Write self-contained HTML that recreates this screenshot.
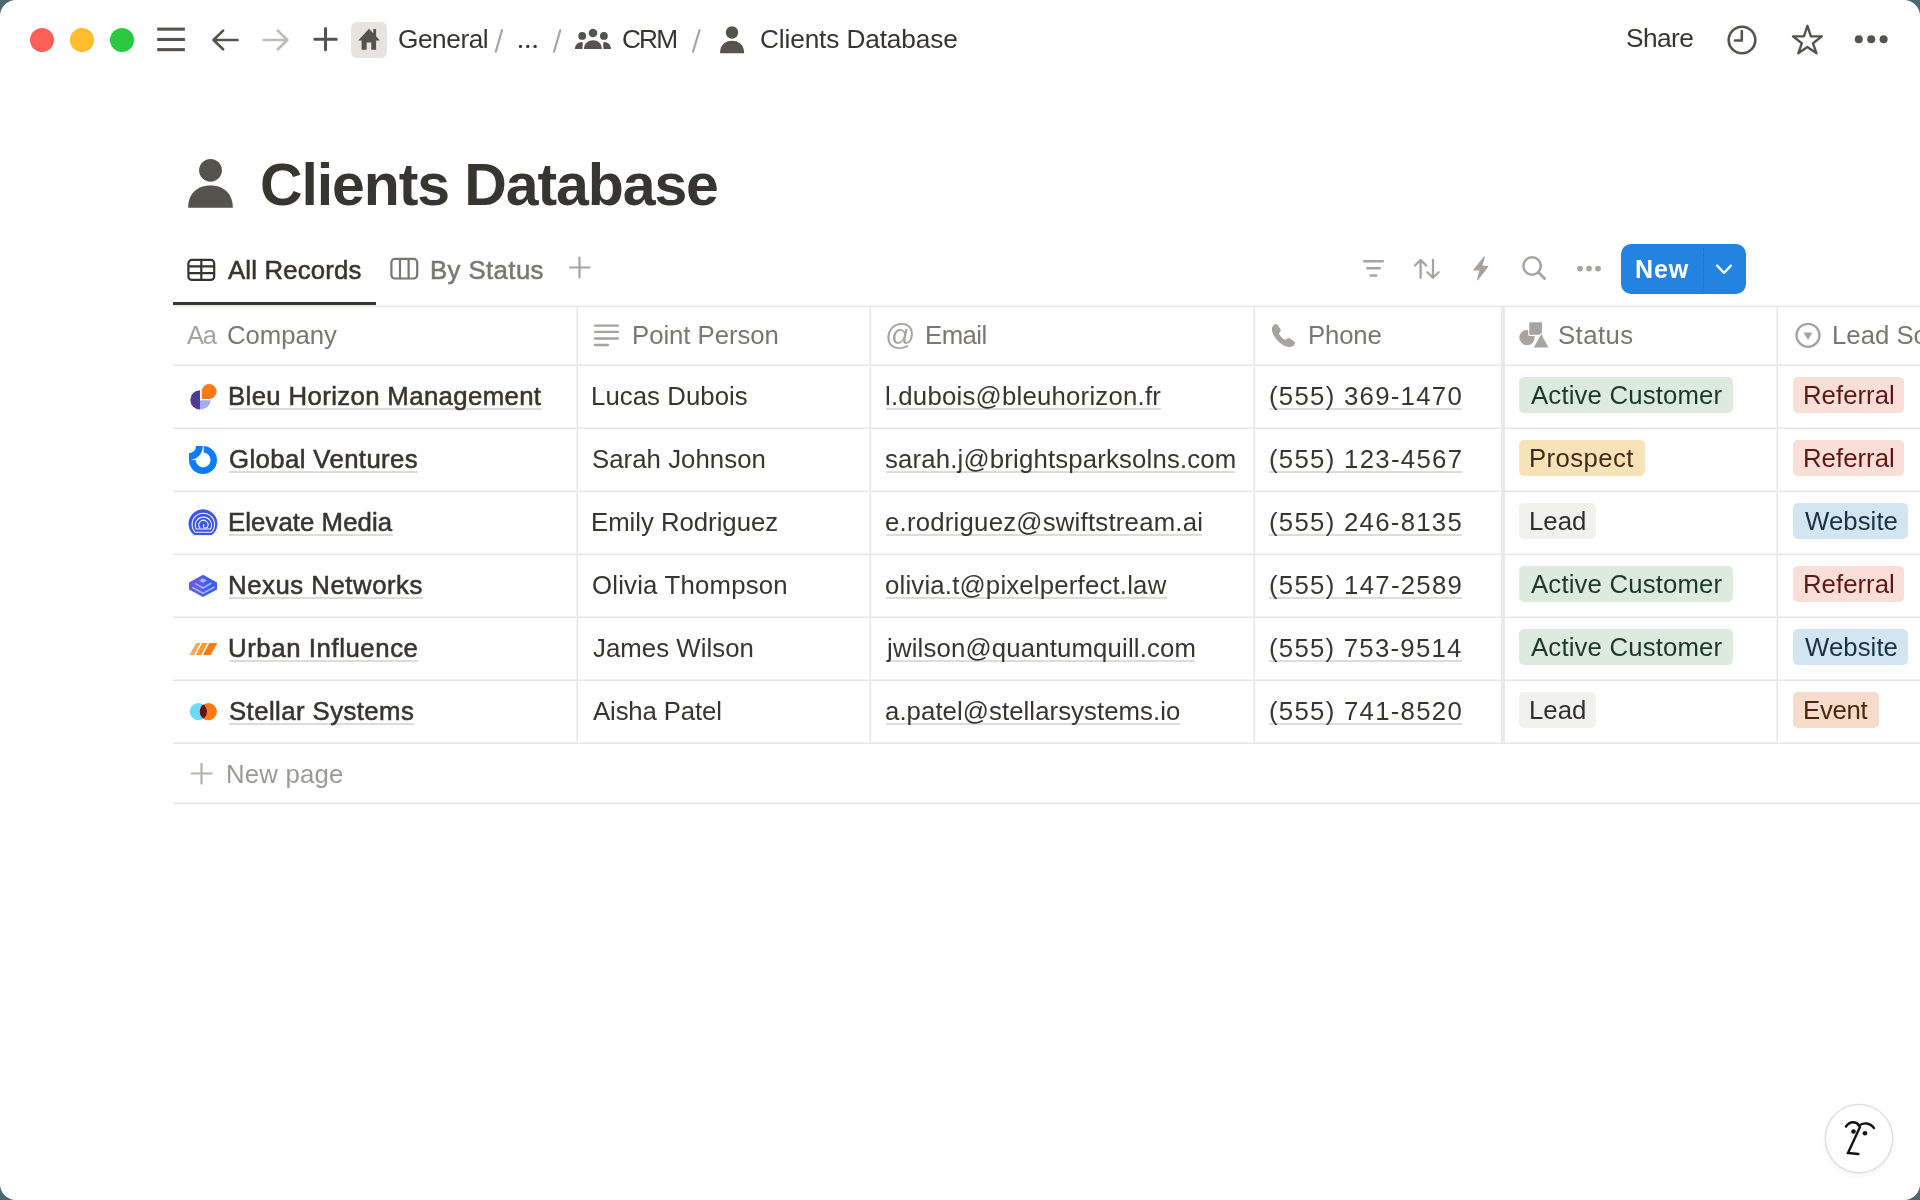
<!DOCTYPE html>
<html><head><meta charset="utf-8"><style>
html,body{margin:0;padding:0;width:1920px;height:1200px;overflow:hidden;background:#4c6871;}
body{font-family:"Liberation Sans",sans-serif;color:#37352f;}
#win{position:absolute;left:0;top:0;width:1920px;height:1200px;background:#fff;border-radius:16px;overflow:hidden;}
.a{position:absolute;}
.t{position:absolute;white-space:nowrap;line-height:1;will-change:transform;}
.m{-webkit-text-stroke:0.55px currentColor;}
svg{position:absolute;left:0;top:0;overflow:visible;}
</style></head><body>
<div id="win">
<div class="a" style="left:30px;top:28px;width:24px;height:24px;border-radius:50%;background:#ff5f57"></div>
<div class="a" style="left:70px;top:28px;width:24px;height:24px;border-radius:50%;background:#febc2e"></div>
<div class="a" style="left:110px;top:28px;width:24px;height:24px;border-radius:50%;background:#28c840"></div>
<svg width="1" height="1"><g fill="#55534e"><rect x="157.2" y="27.6" width="27.7" height="3.1"/><rect x="157.2" y="37.9" width="27.7" height="3.1"/><rect x="157.2" y="48.1" width="27.7" height="3.1"/></g>
<g fill="none" stroke-width="3" stroke-linecap="round" stroke-linejoin="round">
<path d="M223.1 30.6 L213.5 40 L223.1 49.3 M213.5 40 H237.5" stroke="#55534e" stroke-width="2.7"/>
<path d="M277.8 30.6 L287.4 40 L277.8 49.3 M287.4 40 H263.5" stroke="#bdbcb9" stroke-width="2.7"/>
<path d="M325.5 28.5 V49.8 M314.8 39.3 H336.3" stroke="#55534e"/>
</g></svg>
<div class="a" style="left:351px;top:22px;width:36px;height:36px;border-radius:6px;background:#e5e4e1"></div>
<svg width="1" height="1"><path d="M369 28.75 L373.25 33.3 V29.1 H376.1 V36.3 L379.9 40.4 H376.1 V49.75 H371.25 V42.5 H366.6 V49.75 H361.6 V40.4 H358.1 Z" fill="#55534e"/></svg>
<div class="t" style="left:397.52px;top:25.90px;font-size:26.25px;color:#37352f;letter-spacing:-0.447px;">General</div>
<svg width="1" height="1"><g stroke="#a5a4a1" stroke-width="2.2" stroke-linecap="round">
<path d="M502 30.2 L495.8 51.8"/><path d="M560.3 30.2 L554 51.8"/><path d="M699.5 30.2 L693 51.8"/></g>
<g fill="#37352f"><circle cx="520.5" cy="46.4" r="1.7"/><circle cx="527.8" cy="46.4" r="1.7"/><circle cx="535.1" cy="46.4" r="1.7"/></g>
<g fill="#55534e">
<circle cx="582.2" cy="35.9" r="3.9"/><circle cx="593" cy="33" r="4.3"/><circle cx="603.9" cy="35.9" r="3.9"/>
<path d="M584 49 C584 43.5 588 40.3 593 40.3 C598 40.3 601.8 43.5 601.8 49 Z"/>
<path d="M575 49 C575 45 577.5 42.2 581.5 41.9 C583.3 42.5 582.8 43.5 582.5 49 Z"/>
<path d="M611 49 C611 45 608.5 42.2 604.5 41.9 C602.7 42.5 603.2 43.5 603.5 49 Z"/>
<circle cx="732" cy="32.5" r="6.2"/>
<path d="M720 53.3 C720 45.5 725 40.8 732 40.8 C739 40.8 744.2 45.5 744.2 53.3 Z"/>
</g></svg>
<div class="t" style="left:621.71px;top:25.90px;font-size:26.25px;color:#37352f;letter-spacing:-1.855px;">CRM</div>
<div class="t" style="left:759.86px;top:25.90px;font-size:26.25px;color:#37352f;letter-spacing:-0.143px;">Clients Database</div>
<div class="t" style="left:1625.50px;top:25.20px;font-size:26.25px;color:#37352f;letter-spacing:-0.573px;">Share</div>
<svg width="1" height="1"><g fill="none" stroke="#55534e" stroke-width="2.6" stroke-linecap="round" stroke-linejoin="round">
<circle cx="1742" cy="40" r="13.3"/><path d="M1741.8 31 V40.5 H1735"/>
<path d="M1807.4 25.8 L1810.9 36.4 L1821.8 36.4 L1813.0 43.3 L1816.5 53.3 L1807.4 47.0 L1798.3 53.3 L1801.8 43.3 L1793.0 36.4 L1803.9 36.4 Z" stroke-width="2.4"/>
</g>
<g fill="#55534e"><circle cx="1858.8" cy="39.2" r="4"/><circle cx="1871.2" cy="39.2" r="4"/><circle cx="1883.6" cy="39.2" r="4"/></g>
</svg>
<svg width="1" height="1"><g fill="#55534e">
<circle cx="210.5" cy="170.3" r="11.4"/>
<path d="M188.1 207.8 C188.1 194 197 185.6 210.5 185.6 C224 185.6 232.8 194 232.8 207.8 Z"/>
</g></svg>
<div class="t" style="left:260.35px;top:155.75px;font-size:59px;color:#37352f;font-weight:bold;letter-spacing:-1.103px;">Clients Database</div>
<svg width="1" height="1"><g fill="none" stroke="#37352f" stroke-width="2.2">
<rect x="188.4" y="259.9" width="25.8" height="20" rx="3.5"/><path d="M188.4 266.4 H214.2 M188.4 273.2 H214.2 M201.3 259.9 V279.9"/>
</g>
<g fill="none" stroke="#787774" stroke-width="2.2">
<rect x="391.4" y="258.9" width="25.8" height="19.6" rx="3.5"/><path d="M400 258.9 V278.5 M408.6 258.9 V278.5"/>
</g>
<g fill="none" stroke="#a5a4a1" stroke-width="2.2" stroke-linecap="round"><path d="M579.5 257.6 V277.6 M570 267.5 H589.5"/></g>
<g fill="none" stroke="#a5a4a1" stroke-width="2.4" stroke-linecap="round" stroke-linejoin="round">
<path d="M1364.2 261.25 H1382.8 M1367.3 268.3 H1379.7 M1370.6 275.5 H1376.4" stroke-width="2.5"/>
<path d="M1420.6 259.9 V277.8 M1415 265.5 L1420.6 259.9 L1426.2 265.5 M1433 259.9 V277.8 M1427.4 272.2 L1433 277.8 L1438.6 272.2" stroke-width="2.3"/>
<circle cx="1532.1" cy="266" r="8.7" stroke-width="2.5"/><path d="M1538.3 272.3 L1544.6 278.5" stroke-width="2.8"/>
</g>
<path d="M1484.3 257 L1474 269.9 L1480.2 269.9 L1477.6 279.6 L1487.6 266.5 L1481.5 266.5 Z" fill="#a5a4a1" stroke="#a5a4a1" stroke-width="1.3" stroke-linejoin="round"/>
<g fill="#a5a4a1"><circle cx="1580" cy="268.6" r="2.9"/><circle cx="1589" cy="268.6" r="2.9"/><circle cx="1598" cy="268.6" r="2.9"/></g>
</svg>
<div class="t m" style="left:227.60px;top:257.65px;font-size:25.75px;color:#37352f;letter-spacing:0.179px;">All Records</div>
<div class="t m" style="left:429.77px;top:257.65px;font-size:25.75px;color:#787774;letter-spacing:0.411px;">By Status</div>
<div class="a" style="left:173px;top:302px;width:203px;height:3px;background:#37352f"></div>
<div class="a" style="left:1621px;top:244px;width:125px;height:50px;border-radius:10px;background:#2383e2"></div>
<div class="a" style="left:1703px;top:248px;width:0;height:42px;border-left:1px dotted #1b6cc0"></div>
<div class="t" style="left:1634.73px;top:257.20px;font-size:25px;color:#fff;font-weight:bold;letter-spacing:0.851px;">New</div>
<svg width="1" height="1"><path d="M1717 265.5 L1724 272.8 L1731 265.5" fill="none" stroke="#fff" stroke-width="2.4" stroke-linecap="round" stroke-linejoin="round"/></svg>
<div class="a" style="left:173px;top:305px;width:1747px;height:1px;background:#f3f3f2"></div>
<div class="a" style="left:173px;top:306px;width:1747px;height:1px;background:#e6e6e4"></div>
<div class="a" style="left:173px;top:364px;width:1747px;height:1px;background:#f3f3f2"></div>
<div class="a" style="left:173px;top:365px;width:1747px;height:1px;background:#e6e6e4"></div>
<div class="a" style="left:173px;top:427px;width:1747px;height:1px;background:#f3f3f2"></div>
<div class="a" style="left:173px;top:428px;width:1747px;height:1px;background:#e6e6e4"></div>
<div class="a" style="left:173px;top:490px;width:1747px;height:1px;background:#f3f3f2"></div>
<div class="a" style="left:173px;top:491px;width:1747px;height:1px;background:#e6e6e4"></div>
<div class="a" style="left:173px;top:553px;width:1747px;height:1px;background:#f3f3f2"></div>
<div class="a" style="left:173px;top:554px;width:1747px;height:1px;background:#e6e6e4"></div>
<div class="a" style="left:173px;top:616px;width:1747px;height:1px;background:#f3f3f2"></div>
<div class="a" style="left:173px;top:617px;width:1747px;height:1px;background:#e6e6e4"></div>
<div class="a" style="left:173px;top:679px;width:1747px;height:1px;background:#f3f3f2"></div>
<div class="a" style="left:173px;top:680px;width:1747px;height:1px;background:#e6e6e4"></div>
<div class="a" style="left:173px;top:742px;width:1747px;height:1px;background:#f3f3f2"></div>
<div class="a" style="left:173px;top:743px;width:1747px;height:1px;background:#e6e6e4"></div>
<div class="a" style="left:173px;top:802px;width:1747px;height:1px;background:#f3f3f2"></div>
<div class="a" style="left:173px;top:803px;width:1747px;height:1px;background:#e6e6e4"></div>
<div class="a" style="left:576px;top:307px;width:1px;height:436px;background:#f3f3f2"></div>
<div class="a" style="left:577px;top:307px;width:1px;height:436px;background:#e6e6e4"></div>
<div class="a" style="left:869px;top:307px;width:1px;height:436px;background:#f3f3f2"></div>
<div class="a" style="left:870px;top:307px;width:1px;height:436px;background:#e6e6e4"></div>
<div class="a" style="left:1253px;top:307px;width:1px;height:436px;background:#f3f3f2"></div>
<div class="a" style="left:1254px;top:307px;width:1px;height:436px;background:#e6e6e4"></div>
<div class="a" style="left:1776px;top:307px;width:1px;height:436px;background:#f3f3f2"></div>
<div class="a" style="left:1777px;top:307px;width:1px;height:436px;background:#e6e6e4"></div>
<div class="a" style="left:1501px;top:307px;width:4px;height:436px;background:#e9e9e7"></div>
<div class="t" style="left:186.83px;top:323.20px;font-size:25.5px;color:#a5a4a1;letter-spacing:-1.251px;">Aa</div>
<div class="t" style="left:226.52px;top:322.90px;font-size:25.75px;color:#787774;letter-spacing:-0.066px;">Company</div>
<div class="t" style="left:631.62px;top:322.90px;font-size:25.75px;color:#787774;letter-spacing:-0.046px;">Point Person</div>
<div class="t" style="left:924.87px;top:322.90px;font-size:25.75px;color:#787774;letter-spacing:-0.550px;">Email</div>
<div class="t" style="left:1308.37px;top:322.90px;font-size:25.75px;color:#787774;letter-spacing:-0.164px;">Phone</div>
<div class="t" style="left:1558.21px;top:322.90px;font-size:25.75px;color:#787774;letter-spacing:0.438px;">Status</div>
<div class="t" style="left:1831.87px;top:322.90px;font-size:25.75px;color:#787774;">Lead Source</div>
<svg width="1" height="1"><g stroke="#a5a4a1" stroke-width="2.3" stroke-linecap="round">
<path d="M595 325.6 H618 M595 331.9 H618 M595 338.5 H618 M595 345 H608"/></g>
<g fill="none" stroke="#a5a4a1" stroke-width="2.3"><circle cx="1808" cy="335.3" r="11.5"/></g>
<path d="M1803.5 332.5 H1812.5 L1808 340 Z" fill="#a5a4a1"/>
<path d="M1275.8 324.1 C1273.6 324.4 1271.8 326.6 1271.9 329.9 C1272.2 334 1276 339.5 1280.2 342.9 C1282.5 344.8 1284.5 346 1285.8 346.3 C1288.5 347.6 1292.5 347 1294.3 344.9 C1295.3 343.6 1295.2 342.2 1294.2 341.4 L1289.6 338.3 C1288.8 337.8 1287.9 337.9 1287.3 338.5 L1285.5 340.1 C1283 338.9 1280.2 336 1278.7 333.4 L1280.3 331.7 C1280.9 331 1281 330.2 1280.6 329.5 L1277.6 324.8 C1277.2 324.2 1276.5 324 1275.8 324.1 Z" fill="#a5a4a1"/>
<g fill="#a5a4a1" stroke="#fff" stroke-width="2.2" paint-order="stroke" stroke-linejoin="round">
<circle cx="1527" cy="337.6" r="7.7" stroke="none"/>
<rect x="1529.3" y="322.3" width="12.7" height="12.5"/>
<path d="M1541.2 334.3 L1548.6 347.6 L1533.8 347.6 Z"/></g>
</svg>
<div class="t" style="left:885.3px;top:320px;font-size:30px;color:#a5a4a1">@</div>
<div class="a" style="left:229.2px;top:408px;width:313.0px;height:2px;background:#dcdcda"></div>
<div class="a" style="left:886.2px;top:408px;width:274.4px;height:2px;background:#dcdcda"></div>
<div class="a" style="left:1269.2px;top:408px;width:192.5px;height:2px;background:#dcdcda"></div>
<div class="t m" style="left:227.87px;top:384.25px;font-size:25.75px;color:#37352f;letter-spacing:0.369px;">Bleu Horizon Management</div>
<div class="t" style="left:591.37px;top:384.00px;font-size:25.75px;color:#37352f;letter-spacing:0.066px;">Lucas Dubois</div>
<div class="t" style="left:884.76px;top:384.00px;font-size:25.75px;color:#37352f;letter-spacing:0.225px;">l.dubois@bleuhorizon.fr</div>
<div class="t" style="left:1269.18px;top:384.00px;font-size:25.75px;color:#37352f;letter-spacing:1.279px;">(555) 369-1470</div>
<div class="a" style="left:1519px;top:377px;width:213.9px;height:36px;border-radius:5px;background:#dcebdd"></div>
<div class="t" style="left:1531.13px;top:383.40px;font-size:25.75px;color:#1c3829;letter-spacing:0.163px;">Active Customer</div>
<div class="a" style="left:1793px;top:377px;width:111.3px;height:36px;border-radius:5px;background:#fadfd9"></div>
<div class="t" style="left:1803.07px;top:383.40px;font-size:25.75px;color:#5d1715;letter-spacing:0.029px;">Referral</div>
<div class="a" style="left:229.2px;top:471px;width:188.5px;height:2px;background:#dcdcda"></div>
<div class="a" style="left:886.2px;top:471px;width:349.2px;height:2px;background:#dcdcda"></div>
<div class="a" style="left:1269.2px;top:471px;width:192.5px;height:2px;background:#dcdcda"></div>
<div class="t m" style="left:228.53px;top:447.25px;font-size:25.75px;color:#37352f;letter-spacing:0.388px;">Global Ventures</div>
<div class="t" style="left:591.91px;top:447.00px;font-size:25.75px;color:#37352f;letter-spacing:0.054px;">Sarah Johnson</div>
<div class="t" style="left:885.33px;top:447.00px;font-size:25.75px;color:#37352f;letter-spacing:0.169px;">sarah.j@brightsparksolns.com</div>
<div class="t" style="left:1269.18px;top:447.00px;font-size:25.75px;color:#37352f;letter-spacing:1.297px;">(555) 123-4567</div>
<div class="a" style="left:1519px;top:440px;width:125.5px;height:36px;border-radius:5px;background:#f8e3b8"></div>
<div class="t" style="left:1529.27px;top:446.40px;font-size:25.75px;color:#402c1b;letter-spacing:0.385px;">Prospect</div>
<div class="a" style="left:1793px;top:440px;width:111.3px;height:36px;border-radius:5px;background:#fadfd9"></div>
<div class="t" style="left:1803.07px;top:446.40px;font-size:25.75px;color:#5d1715;letter-spacing:0.029px;">Referral</div>
<div class="a" style="left:229.2px;top:534px;width:164.2px;height:2px;background:#dcdcda"></div>
<div class="a" style="left:886.2px;top:534px;width:316.0px;height:2px;background:#dcdcda"></div>
<div class="a" style="left:1269.2px;top:534px;width:192.5px;height:2px;background:#dcdcda"></div>
<div class="t m" style="left:227.87px;top:510.25px;font-size:25.75px;color:#37352f;letter-spacing:0.071px;">Elevate Media</div>
<div class="t" style="left:591.37px;top:510.00px;font-size:25.75px;color:#37352f;letter-spacing:-0.026px;">Emily Rodriguez</div>
<div class="t" style="left:885.33px;top:510.00px;font-size:25.75px;color:#37352f;letter-spacing:0.226px;">e.rodriguez@swiftstream.ai</div>
<div class="t" style="left:1269.18px;top:510.00px;font-size:25.75px;color:#37352f;letter-spacing:1.285px;">(555) 246-8135</div>
<div class="a" style="left:1519px;top:503px;width:77.1px;height:36px;border-radius:5px;background:#f1f1ef"></div>
<div class="t" style="left:1529.27px;top:509.40px;font-size:25.75px;color:#32302c;letter-spacing:0.042px;">Lead</div>
<div class="a" style="left:1793px;top:503px;width:115.0px;height:36px;border-radius:5px;background:#d3e5f0"></div>
<div class="t" style="left:1804.93px;top:509.40px;font-size:25.75px;color:#183347;letter-spacing:0.065px;">Website</div>
<div class="a" style="left:229.2px;top:597px;width:193.6px;height:2px;background:#dcdcda"></div>
<div class="a" style="left:886.2px;top:597px;width:280.8px;height:2px;background:#dcdcda"></div>
<div class="a" style="left:1269.2px;top:597px;width:192.5px;height:2px;background:#dcdcda"></div>
<div class="t m" style="left:227.87px;top:573.25px;font-size:25.75px;color:#37352f;letter-spacing:0.534px;">Nexus Networks</div>
<div class="t" style="left:592.21px;top:573.00px;font-size:25.75px;color:#37352f;letter-spacing:0.209px;">Olivia Thompson</div>
<div class="t" style="left:885.35px;top:573.00px;font-size:25.75px;color:#37352f;letter-spacing:0.193px;">olivia.t@pixelperfect.law</div>
<div class="t" style="left:1269.18px;top:573.00px;font-size:25.75px;color:#37352f;letter-spacing:1.295px;">(555) 147-2589</div>
<div class="a" style="left:1519px;top:566px;width:213.9px;height:36px;border-radius:5px;background:#dcebdd"></div>
<div class="t" style="left:1531.13px;top:572.40px;font-size:25.75px;color:#1c3829;letter-spacing:0.163px;">Active Customer</div>
<div class="a" style="left:1793px;top:566px;width:111.3px;height:36px;border-radius:5px;background:#fadfd9"></div>
<div class="t" style="left:1803.07px;top:572.40px;font-size:25.75px;color:#5d1715;letter-spacing:0.029px;">Referral</div>
<div class="a" style="left:229.2px;top:660px;width:189.1px;height:2px;background:#dcdcda"></div>
<div class="a" style="left:886.2px;top:660px;width:308.6px;height:2px;background:#dcdcda"></div>
<div class="a" style="left:1269.2px;top:660px;width:192.5px;height:2px;background:#dcdcda"></div>
<div class="t m" style="left:228.00px;top:636.25px;font-size:25.75px;color:#37352f;letter-spacing:0.581px;">Urban Influence</div>
<div class="t" style="left:592.86px;top:636.00px;font-size:25.75px;color:#37352f;letter-spacing:0.054px;">James Wilson</div>
<div class="t" style="left:887.11px;top:636.00px;font-size:25.75px;color:#37352f;letter-spacing:0.161px;">jwilson@quantumquill.com</div>
<div class="t" style="left:1269.18px;top:636.00px;font-size:25.75px;color:#37352f;letter-spacing:1.255px;">(555) 753-9514</div>
<div class="a" style="left:1519px;top:629px;width:213.9px;height:36px;border-radius:5px;background:#dcebdd"></div>
<div class="t" style="left:1531.13px;top:635.40px;font-size:25.75px;color:#1c3829;letter-spacing:0.163px;">Active Customer</div>
<div class="a" style="left:1793px;top:629px;width:115.0px;height:36px;border-radius:5px;background:#d3e5f0"></div>
<div class="t" style="left:1804.93px;top:635.40px;font-size:25.75px;color:#183347;letter-spacing:0.065px;">Website</div>
<div class="a" style="left:229.2px;top:723px;width:184.5px;height:2px;background:#dcdcda"></div>
<div class="a" style="left:886.2px;top:723px;width:293.9px;height:2px;background:#dcdcda"></div>
<div class="a" style="left:1269.2px;top:723px;width:192.5px;height:2px;background:#dcdcda"></div>
<div class="t m" style="left:228.52px;top:699.25px;font-size:25.75px;color:#37352f;letter-spacing:0.428px;">Stellar Systems</div>
<div class="t" style="left:593.23px;top:699.00px;font-size:25.75px;color:#37352f;letter-spacing:-0.132px;">Aisha Patel</div>
<div class="t" style="left:885.31px;top:699.00px;font-size:25.75px;color:#37352f;letter-spacing:0.068px;">a.patel@stellarsystems.io</div>
<div class="t" style="left:1269.18px;top:699.00px;font-size:25.75px;color:#37352f;letter-spacing:1.279px;">(555) 741-8520</div>
<div class="a" style="left:1519px;top:692px;width:77.1px;height:36px;border-radius:5px;background:#f1f1ef"></div>
<div class="t" style="left:1529.27px;top:698.40px;font-size:25.75px;color:#32302c;letter-spacing:0.042px;">Lead</div>
<div class="a" style="left:1793px;top:692px;width:85.8px;height:36px;border-radius:5px;background:#f6dccb"></div>
<div class="t" style="left:1803.07px;top:698.40px;font-size:25.75px;color:#49290e;letter-spacing:-0.300px;">Event</div>
<svg width="1" height="1">
<path d="M200 390.2 A9.7 9.7 0 0 0 200 409.6 Z" fill="#523a98"/>
<path d="M200 400.2 H210.6 A10.6 9.4 0 0 1 200 409.6 Z" fill="#a3aef2"/>
<path d="M201.7 399 V391.5 A7.5 7.5 0 1 1 209.2 399 Z" fill="#ff7a16"/>
<path fill-rule="evenodd" fill="#0b7bff" d="M203.2 446 A14 14 0 1 1 189 460 V453.2 A7 7 0 0 0 196 446 Z M203.7 452.6 A7.4 7.4 0 1 1 195.8 460.2 L190.2 459.8 C197 459.3 202.3 455 202.9 446 L203.7 446 Z"/>
<path d="M194.09 534.6 A14 14 0 1 1 211.91 534.6 Z" fill="#3b55e6" stroke="#3b55e6" stroke-width="1" stroke-linejoin="round"/>
<g fill="none" stroke="#fff" stroke-width="1.05" opacity="0.95"><path d="M195.36 532.3 A11.2 11.2 0 1 1 211.24 532.3 Z"/><path d="M196.19 528.9 A8.1 8.1 0 1 1 210.61 528.9 Z"/><path d="M200.2 528.2 A4.6 4.6 0 1 1 207.4 527.2 C206.6 528 205.4 528.2 204.3 527.7 C203.4 527.2 203.2 526 203.6 525.2"/></g>
<circle cx="203.6" cy="525" r="0.8" fill="#fff"/>
<path d="M203 574.8 L217 582.5 V589.5 L203 597 Z" fill="#3e5de8"/>
<path d="M203 574.8 L189 582.5 V589.5 L203 597 Z" fill="#5d5ce6"/>
<g fill="none" stroke="#a6b0f2" stroke-width="1.6">
<path d="M192.2 587.2 L203 593.3 L214.5 587"/><path d="M195 583.4 L203 588 L211.5 583"/>
</g>
<path d="M203 578.3 L207 580.6 L203 582.9 L199 580.6 Z" fill="#a6b0f2"/>
<path d="M196.2 643 H200.6 L194.3 654.9 H189.4 Z" fill="#fba86a"/>
<path d="M202.2 643 H207.6 L201.2 654.9 H195.8 Z" fill="#fb9a2d"/>
<path d="M209.3 643 H217.3 L210.8 654.9 H202.9 Z" fill="#ff7a17"/>
<circle cx="198.4" cy="711.6" r="8.6" fill="#6bd9fc"/>
<circle cx="208.3" cy="711.6" r="8.6" fill="#ff7a14"/>
<path d="M203.35 704.6 A8.6 8.6 0 0 1 203.35 718.6 A8.6 8.6 0 0 1 203.35 704.6 Z" fill="#5d1814"/>
</svg>

<svg width="1" height="1"><g stroke="#b3b2af" stroke-width="2.2" stroke-linecap="round"><path d="M201.5 763.8 V783.6 M191.6 773.5 H211.6"/></g></svg>
<div class="t" style="left:225.87px;top:762.00px;font-size:25.75px;color:#9b9a97;letter-spacing:0.208px;">New page</div>
<div class="a" style="left:1825.5px;top:1104.5px;width:66px;height:67px;border-radius:50%;background:#fff;box-shadow:0 0 0 1.5px #e0dfdd, 0 3px 6px rgba(15,15,15,0.06)"></div>
<svg width="1" height="1"><g fill="none" stroke="#111" stroke-width="2.4" stroke-linecap="round">
<path d="M1846 1126.5 C1850 1121 1856 1121 1859.5 1126"/><path d="M1859 1126 C1863 1122 1870 1122.5 1874 1128"/>
<path d="M1860 1127 L1848 1153 L1858.5 1154"/></g>
<g fill="#111"><circle cx="1853.5" cy="1131.5" r="2.3"/><circle cx="1865" cy="1133.3" r="2.3"/></g></svg>
</div>
</body></html>
